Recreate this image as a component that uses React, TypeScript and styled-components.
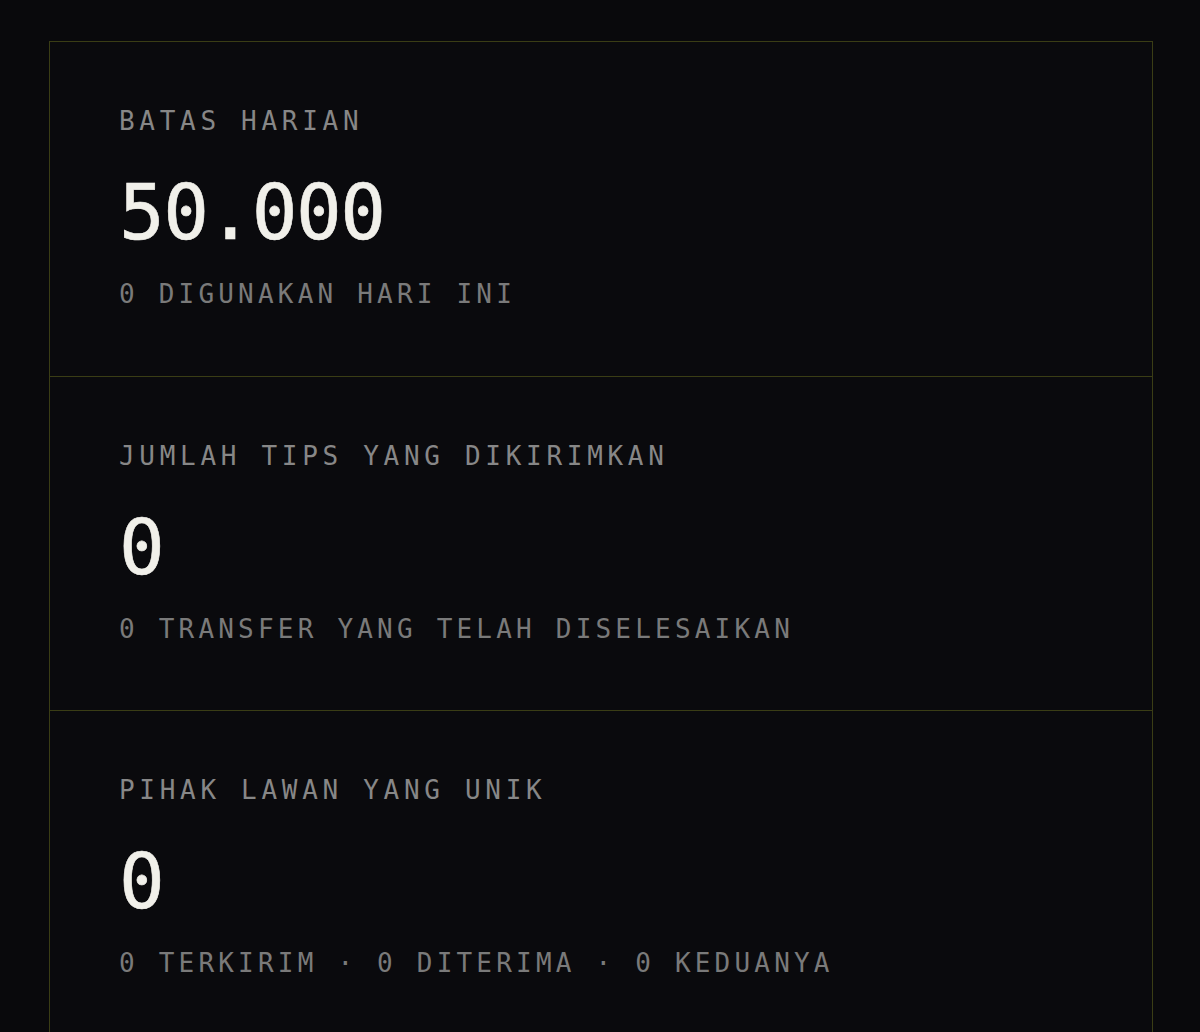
import React from "react";
import styled, { createGlobalStyle } from "styled-components";

const GlobalStyle = createGlobalStyle`
  html, body {
    margin: 0;
    padding: 0;
    background: #09090c;
  }
  body {
    font-family: "DejaVu Sans Mono", "Liberation Mono", monospace;
    -webkit-font-smoothing: antialiased;
  }
`;

const Page = styled.div`
  padding: 41px 47px 0 49px;
  min-height: 1032px;
  box-sizing: border-box;
`;

const Panel = styled.section`
  display: flex;
  flex-direction: column;
  border: 1px solid #3a3d15;
  background: #0a0a0d;
`;

const Card = styled.div`
  display: flex;
  flex-direction: column;
  height: 334px;
  box-sizing: border-box;
  padding: 66px 0 0 69px;
  & + & {
    border-top: 1px solid #3a3d15;
  }
`;

const Label = styled.div`
  font-size: 26px;
  line-height: 26px;
  letter-spacing: 4.7px;
  color: #878787;
  text-transform: uppercase;
  white-space: nowrap;
`;

const Value = styled.div`
  margin-top: 42px;
  font-size: 76px;
  line-height: 74px;
  letter-spacing: -1.5px;
  color: #f1f0ea;
  white-space: nowrap;
  -webkit-text-stroke: 0.6px #f1f0ea;
`;

const Sub = styled.div`
  margin-top: 31px;
  font-size: 26px;
  line-height: 26px;
  letter-spacing: 4.2px;
  color: #7a7a7a;
  white-space: nowrap;
`;

const stats = [
  { label: "BATAS HARIAN", value: "50.000", sub: "0 DIGUNAKAN HARI INI" },
  { label: "JUMLAH TIPS YANG DIKIRIMKAN", value: "0", sub: "0 TRANSFER YANG TELAH DISELESAIKAN" },
  { label: "PIHAK LAWAN YANG UNIK", value: "0", sub: "0 TERKIRIM · 0 DITERIMA · 0 KEDUANYA" },
];

export default function App() {
  return (
    <>
      <GlobalStyle />
      <Page>
        <Panel>
          {stats.map((s) => (
            <Card key={s.label}>
              <Label>{s.label}</Label>
              <Value>{s.value}</Value>
              <Sub>{s.sub}</Sub>
            </Card>
          ))}
        </Panel>
      </Page>
    </>
  );
}
